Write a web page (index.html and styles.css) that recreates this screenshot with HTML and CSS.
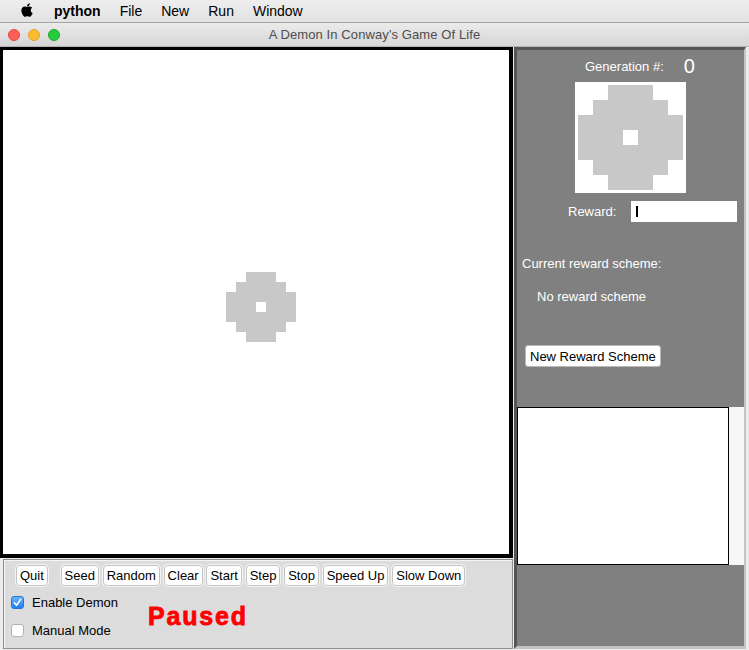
FILE: index.html
```html
<!DOCTYPE html>
<html>
<head>
<meta charset="utf-8">
<link rel="stylesheet" href="styles.css">
</head>
<body>
<div class="menubar">
  <svg class="apple" viewBox="0 0 170 170" width="14" height="16"><path fill="#000" d="M150.37 130.25c-2.45 5.66-5.350 10.87-8.710 15.66-4.580 6.530-8.330 11.050-11.220 13.560-4.480 4.120-9.280 6.230-14.420 6.350-3.690 0-8.140-1.050-13.320-3.180-5.197-2.120-9.973-3.170-14.340-3.170-4.580 0-9.492 1.050-14.746 3.170-5.262 2.130-9.501 3.240-12.742 3.350-4.929 0.210-9.842-1.960-14.746-6.520-3.130-2.730-7.045-7.410-11.735-14.040-5.032-7.080-9.169-15.290-12.410-24.650-3.471-10.110-5.211-19.900-5.211-29.378 0-10.857 2.346-20.221 7.045-28.068 3.693-6.303 8.606-11.275 14.755-14.925s12.793-5.510 19.948-5.629c3.915 0 9.049 1.211 15.429 3.591 6.362 2.388 10.447 3.599 12.238 3.599 1.339 0 5.877-1.416 13.570-4.239 7.275-2.618 13.415-3.702 18.445-3.275 13.630 1.100 23.870 6.473 30.680 16.153-12.190 7.386-18.220 17.731-18.100 31.002 0.110 10.337 3.860 18.939 11.230 25.769 3.340 3.170 7.070 5.620 11.220 7.360-0.900 2.610-1.850 5.110-2.860 7.510zM119.11 7.240c0 8.102-2.960 15.667-8.860 22.669-7.120 8.324-15.732 13.134-25.071 12.375-0.119-0.972-0.188-1.995-0.188-3.070 0-7.778 3.386-16.102 9.399-22.908 3.002-3.446 6.820-6.311 11.450-8.597 4.620-2.252 8.990-3.497 13.100-3.710 0.120 1.083 0.170 2.166 0.170 3.240z"/></svg>
  <span class="menu-app">python</span>
  <span class="menu-item">File</span>
  <span class="menu-item">New</span>
  <span class="menu-item">Run</span>
  <span class="menu-item">Window</span>
</div>
<div class="titlebar">
  <div class="lights">
    <span class="light red"></span>
    <span class="light yellow"></span>
    <span class="light green"></span>
  </div>
  <div class="title">A Demon In Conway's Game Of Life</div>
  <div></div>
</div>
<div class="window">
  <div class="leftcol">
    <div class="board">
      <svg class="board-svg" width="506" height="504" shape-rendering="crispEdges">
        <g transform="translate(223 222) scale(10)" fill="#c8c8c8">
          <rect x="2" y="0" width="3" height="1"/>
          <rect x="1" y="1" width="5" height="1"/>
          <rect x="0" y="2" width="7" height="3"/>
          <rect x="1" y="5" width="5" height="1"/>
          <rect x="2" y="6" width="3" height="1"/>
          <rect x="3" y="3" width="1" height="1" fill="#fff"/>
        </g>
      </svg>
    </div>
    <div class="controls">
      <div class="btn-row">
        <span class="btn">Quit</span>
        <span class="btn btn-gap">Seed</span>
        <span class="btn">Random</span>
        <span class="btn">Clear</span>
        <span class="btn">Start</span>
        <span class="btn">Step</span>
        <span class="btn">Stop</span>
        <span class="btn">Speed Up</span>
        <span class="btn">Slow Down</span>
      </div>
      <div class="status-row">
        <div class="checks">
          <div class="check-row">
            <span class="cb cb-on"><svg viewBox="0 0 13 13" width="13" height="13"><path d="M3.3 6.8 L5.5 9.3 L9.6 3.4" fill="none" stroke="#fff" stroke-width="1.6" stroke-linecap="round" stroke-linejoin="round"/></svg></span>
            <span class="cb-label">Enable Demon</span>
          </div>
          <div class="check-row">
            <span class="cb cb-off"></span>
            <span class="cb-label">Manual Mode</span>
          </div>
        </div>
        <div class="paused">Paused</div>
      </div>
    </div>
  </div>
  <div class="side">
    <div class="gen-row">
      <span class="gen-label">Generation #:</span>
      <span class="gen-num">0</span>
    </div>
    <div class="preview">
      <svg width="111" height="111" shape-rendering="crispEdges">
        <g transform="translate(3 3) scale(15)" fill="#c8c8c8">
          <rect x="2" y="0" width="3" height="1"/>
          <rect x="1" y="1" width="5" height="1"/>
          <rect x="0" y="2" width="7" height="3"/>
          <rect x="1" y="5" width="5" height="1"/>
          <rect x="2" y="6" width="3" height="1"/>
          <rect x="3" y="3" width="1" height="1" fill="#fff"/>
        </g>
      </svg>
    </div>
    <div class="reward-row">
      <span class="reward-label">Reward:</span>
      <span class="reward-input"><span class="caret"></span></span>
    </div>
    <div class="scheme-title">Current reward scheme:</div>
    <div class="scheme-value">No reward scheme</div>
    <span class="btn side-btn">New Reward Scheme</span>
    <div class="list-row">
      <div class="listbox"></div>
      <div class="scrollbar"></div>
    </div>
  </div>
</div>
</body>
</html>
```

FILE: styles.css
```css
* { box-sizing: border-box; }

body {
  margin: 0;
  width: 749px;
  height: 650px;
  overflow: hidden;
  background: #ececec;
  font-family: "Liberation Sans", Arial, sans-serif;
  font-size: 13px;
  color: #000;
}

.menubar {
  height: 23px;
  border-bottom: 1px solid #a4a4a4;
  background: linear-gradient(#eeeeee, #e2e2e2);
  display: flex;
  align-items: center;
  padding-left: 20px;
  font-size: 14px;
}

.apple { display: block; margin-top: -2px; }

.menu-app {
  font-weight: 700;
  margin-left: 20px;
}

.menu-item { margin-left: 19px; }

.titlebar {
  height: 24px;
  border-bottom: 1px solid #b3b3b3;
  background: linear-gradient(#ebebeb, #d6d6d6);
  display: grid;
  grid-template-columns: 1fr auto 1fr;
  align-items: center;
}

.lights {
  display: flex;
  gap: 8px;
  padding-left: 8px;
}

.light {
  width: 12px;
  height: 12px;
  border-radius: 50%;
  display: block;
}
.red { background: #fc5f57; border: 1px solid #df4940; }
.yellow { background: #fdbb2e; border: 1px solid #dea236; }
.green { background: #27c93f; border: 1px solid #1aab29; }

.title {
  color: #4d4d4d;
  font-size: 13px;
  letter-spacing: 0.1px;
}

.window {
  display: flex;
  height: 603px;
}

.leftcol {
  width: 513px;
  display: flex;
  flex-direction: column;
}

.board {
  height: 511px;
  border-style: solid;
  border-color: #000;
  border-width: 3px 4px 4px 3px;
  background: #fff;
}

.board-svg { display: block; }

.controls {
  margin: 1px 0 0 3px;
  height: 90px;
  width: 510px;
  background: #dcdcdc;
  border: 1px solid #8e8e8e;
  box-shadow: inset 1px 1px 0 #f4f4f4;
  padding: 5px 0 0 7px;
}

.btn-row {
  display: flex;
  gap: 3.75px;
  margin-left: 5px;
}

.btn {
  display: inline-flex;
  align-items: center;
  height: 21px;
  padding: 0 3px;
  background: #fff;
  border: 1px solid #c4c4c4;
  border-radius: 4px;
  box-shadow: 0 0 0 1px #f3f3f3;
  font-size: 13px;
  color: #000;
  white-space: nowrap;
}

.btn-gap { margin-left: 9px; }

.status-row {
  display: flex;
  align-items: center;
  margin-top: 6px;
}

.checks {
  width: 137px;
  display: flex;
  flex-direction: column;
  gap: 8px;
}

.check-row {
  height: 20px;
  display: flex;
  align-items: center;
}

.cb {
  width: 13px;
  height: 13px;
  border-radius: 3px;
  display: block;
}
.cb svg { display: block; }
.cb-on {
  background: linear-gradient(#6cb3fa, #1f7ff5);
  border: 1px solid #2a74d6;
}
.cb-on svg { margin: -1px; }
.cb-off {
  background: #fff;
  border: 1px solid #b3b3b3;
}

.cb-label {
  margin-left: 8px;
  font-size: 13px;
}

.paused {
  color: #ff0000;
  font-weight: 700;
  font-size: 25px;
  letter-spacing: 1.8px;
  -webkit-text-stroke: 0.8px #ff0000;
  margin-top: 1px;
}

.side {
  width: 232px;
  height: 602px;
  margin-left: 1px;
  background: #808080;
  border-style: solid;
  border-width: 3px 2px 3px 3px;
  border-color: #555555 #c4c4c4 #c4c4c4 #555555;
  color: #fff;
  display: flex;
  flex-direction: column;
  align-items: flex-start;
}

.gen-row {
  margin-top: 4px;
  height: 24px;
  display: flex;
  align-items: center;
  gap: 20px;
  padding-left: 68px;
}

.gen-num { font-size: 20px; }

.preview {
  margin: 4px 0 0 58px;
  width: 111px;
  height: 111px;
  background: #fff;
}
.preview svg { display: block; }

.reward-row {
  margin-top: 8px;
  display: flex;
  align-items: center;
  gap: 15px;
  padding-left: 51px;
}

.reward-input {
  width: 106px;
  height: 21px;
  background: #fff;
  display: flex;
  align-items: center;
}

.caret {
  width: 2px;
  height: 11px;
  background: #000;
  margin-left: 5px;
}

.scheme-title {
  margin-top: 34px;
  line-height: 16px;
  padding-left: 5px;
}

.scheme-value {
  margin-top: 17px;
  line-height: 16px;
  padding-left: 20px;
}

.side-btn {
  margin: 40px 0 0 8px;
  height: 22px;
  padding: 0 4px;
  border-radius: 3px;
  border-color: #b9b9b9;
  box-shadow: none;
}

.list-row {
  margin-top: 40px;
  display: flex;
  height: 158px;
}

.listbox {
  width: 212px;
  height: 158px;
  background: #fff;
  border: 1px solid #000;
}

.scrollbar {
  width: 15px;
  height: 158px;
  background: #f7f7f7;
}
```
